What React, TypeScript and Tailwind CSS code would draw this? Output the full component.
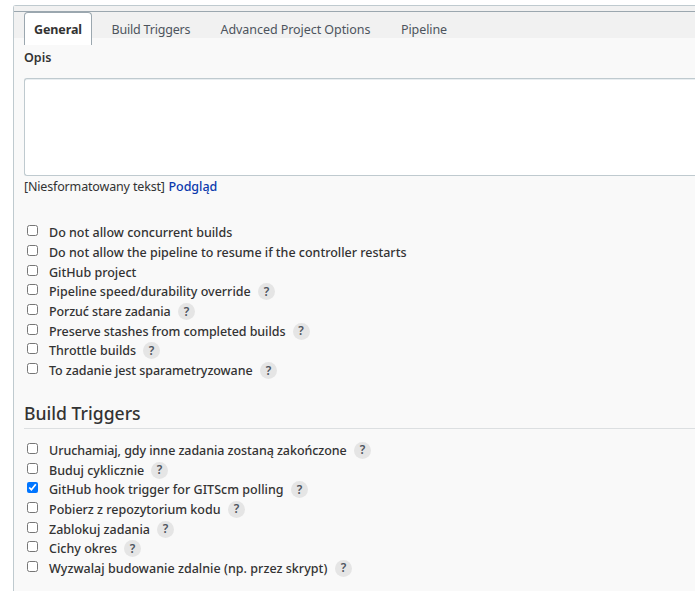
type Option = { label: string; help?: boolean; checked?: boolean; width: string };

const generalOptions: Option[] = [
  { label: "Do not allow concurrent builds", width: "w-[184px]" },
  { label: "Do not allow the pipeline to resume if the controller restarts", width: "w-[358px] tracking-[-0.015px]" },
  { label: "GitHub project", width: "w-[88px]" },
  { label: "Pipeline speed/durability override", help: true, width: "w-[202px] tracking-[-0.01px]" },
  { label: "Porzuć stare zadania", help: true, width: "w-[122px] tracking-[-0.1px]" },
  { label: "Preserve stashes from completed builds", help: true, width: "w-[236.5px] tracking-[-0.07px]" },
  { label: "Throttle builds", help: true, width: "w-[87px]" },
  { label: "To zadanie jest sparametryzowane", help: true, width: "w-[204px] tracking-[-0.07px]" },
];

const triggerOptions: Option[] = [
  { label: "Uruchamiaj, gdy inne zadania zostaną zakończone", help: true, width: "w-[298px] tracking-[-0.06px]" },
  { label: "Buduj cyklicznie", help: true, width: "w-[95px]" },
  { label: "GitHub hook trigger for GITScm polling", help: true, checked: true, width: "w-[235px] tracking-[0.02px]" },
  { label: "Pobierz z repozytorium kodu", help: true, width: "w-[172px]" },
  { label: "Zablokuj zadania", help: true, width: "w-[101px]" },
  { label: "Cichy okres", help: true, width: "w-[68px]" },
  { label: "Wyzwalaj budowanie zdalnie (np. przez skrypt)", help: true, width: "w-[279px] tracking-[0.03px]" },
];

function OptionRow({ label, help, checked, width }: Option) {
  return (
    <label className="flex h-[19.7px] items-center pl-[3px]">
      <input
        type="checkbox"
        defaultChecked={checked}
        className="mr-px mb-1 size-[11px] shrink-0 accent-[#0075ff]"
      />
      <span className={`ml-[10px] whitespace-nowrap text-[12.5px] leading-[19px] font-medium ${width}`}>
        {label}
      </span>
      {help && (
        <span className="ml-[7px] flex size-[17px] shrink-0 items-center justify-center rounded-full bg-[#e5e5e5] text-[12px] leading-none font-semibold text-[#4d545d]">
          ?
        </span>
      )}
    </label>
  );
}

export default function App() {
  return (
    <div className="h-[591px] w-full overflow-hidden bg-white pt-[5px] pl-[13px] font-['Noto_Sans','Liberation_Sans',sans-serif] text-[12.5px] text-[#333]">
      <main className="h-[600px] rounded-tl-[3px] border-t border-l border-[#bfcacf] bg-[#f9f9f9]">
        <nav className="mt-[5px] h-[27px] border-t border-[#9ba7af] bg-[#f1f1f1] shadow-[0_-5px_0_#f1f1f1]">
          <div className="flex pl-[10px] text-[#4d545d]">
            <div className="flex h-[33px] w-[68px] shrink-0 items-center justify-center rounded-t-[4px] border-x border-t border-[#9ba7af] bg-white pt-[3px] font-bold tracking-[-0.1px] text-[#333]">
              General
            </div>
            <div className="flex h-[34px] items-center pt-[2px] tracking-[-0.2px] whitespace-nowrap">
              <span className="ml-[19.5px] w-[79px]">Build Triggers</span>
              <span className="ml-[30px] w-[150px] tracking-[-0.06px]">Advanced Project Options</span>
              <span className="ml-[30.5px] tracking-[-0.1px]">Pipeline</span>
            </div>
          </div>
        </nav>
        <div className="pl-[10px]">
          <div className="pt-[10px]">
            <div className="h-[20px] leading-[20px] font-semibold">Opis</div>
          </div>
          <textarea
            aria-label="Opis"
            className="mt-[10px] block h-[98px] w-full resize-none rounded-l-[3px] border-y border-l border-[#bfcacf] bg-white shadow-[inset_0_1px_0_#e9eef1] outline-none"
          />
          <div className="flex h-[22px] items-center gap-[3.5px] whitespace-nowrap">
            <span className="w-[141px] tracking-[-0.16px]">[Niesformatowany tekst]</span>
            <a className="font-medium tracking-[-0.05px] text-[#0b3aad]">Podgląd</a>
          </div>
          <section className="mt-[25px]">
            {generalOptions.map((option) => (
              <OptionRow key={option.label} {...option} />
            ))}
          </section>
          <h2 className="mt-[18px] h-[30px] border-b border-[#dcdfe1] text-[17.6px] leading-[29px] font-medium">
            Build Triggers
          </h2>
          <section className="mt-3">
            {triggerOptions.map((option) => (
              <OptionRow key={option.label} {...option} />
            ))}
          </section>
        </div>
      </main>
    </div>
  );
}
